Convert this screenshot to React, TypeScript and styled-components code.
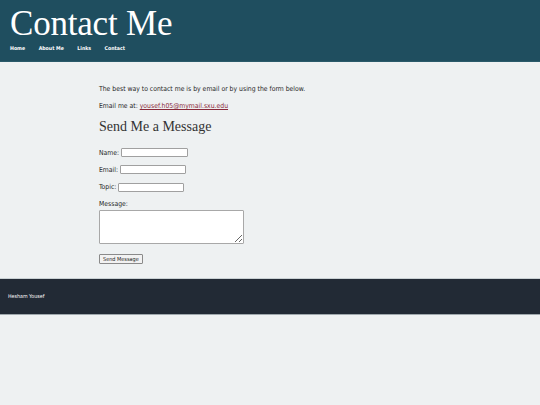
import styled, { createGlobalStyle } from 'styled-components';

const GlobalStyle = createGlobalStyle`
    html, body {
        margin: 0;
        padding: 0;
        background: #eef1f2;
    }
    body {
        font-family: "DejaVu Sans Condensed", "DejaVu Sans", sans-serif;
        font-size: 6.8px;
        color: #1e1e1e;
    }
`;

const App = () => {
    return (
        <>
            <GlobalStyle />
            <Header>
                <Title>Contact Me</Title>
                <Nav>
                    <NavLink href="#">Home</NavLink>
                    <NavLink href="#">About Me</NavLink>
                    <NavLink href="#">Links</NavLink>
                    <NavLink href="#">Contact</NavLink>
                </Nav>
            </Header>

            <Main>
                <Paragraph>The best way to contact me is by email or by using the form below.</Paragraph>
                <Paragraph>
                    Email me at: <MailLink href="#">yousef.h05@mymail.sxu.edu</MailLink>
                </Paragraph>

                <Heading>Send Me a Message</Heading>

                <Form onSubmit={e => e.preventDefault()}>
                    <Field>
                        <label>Name:</label>
                        <TextInput type="text" $width={67} />
                    </Field>
                    <Field>
                        <label>Email:</label>
                        <TextInput type="text" $width={66} />
                    </Field>
                    <Field>
                        <label>Topic:</label>
                        <TextInput type="text" $width={66} />
                    </Field>
                    <Stacked>
                        <label>Message:</label>
                        <MessageBox />
                    </Stacked>
                    <SendButton type="submit">Send Message</SendButton>
                </Form>
            </Main>

            <Footer>Hesham Yousef</Footer>
        </>
    );
};

export default App;

const Header = styled.header`
    background: #1f4e5f;
    height: 62px;
    box-sizing: border-box;
    padding: 6px 10px 0;
    border-bottom: 1px solid #2a5a6a;
`;

const Title = styled.h1`
    margin: 0;
    font-family: "Liberation Serif", "Times New Roman", serif;
    font-weight: normal;
    font-size: 35px;
    line-height: 36px;
    color: #fff;
    letter-spacing: -0.2px;
`;

const Nav = styled.nav`
    display: flex;
    gap: 13.5px;
    margin-top: 3px;
`;

const NavLink = styled.a`
    color: #fff;
    font-weight: bold;
    font-size: 5.2px;
    text-decoration: none;
`;

const Main = styled.main`
    padding: 23px 0 14px 99px;
`;

const Paragraph = styled.p`
    margin: 0 0 9px;
    line-height: 8px;
`;

const MailLink = styled.a`
    color: #8a2a3a;
    text-decoration: underline;
`;

const Heading = styled.h2`
    margin: 9px 0 13px;
    font-family: "Liberation Serif", "Times New Roman", serif;
    font-weight: normal;
    font-size: 14px;
    line-height: 16px;
    color: #333;
`;

const Form = styled.form`
    display: flex;
    flex-direction: column;
    align-items: flex-start;
    gap: 8.4px;
`;

const Field = styled.div`
    display: flex;
    align-items: center;
    gap: 2px;
    height: 9px;
`;

const Stacked = styled.div`
    display: flex;
    flex-direction: column;
    gap: 2px;
`;

const TextInput = styled.input<{ $width: number }>`
    box-sizing: border-box;
    width: ${p => p.$width}px;
    height: 9px;
    padding: 0;
    border: 1px solid #a0a0a0;
    border-radius: 1px;
    background: #fff;
`;

const MessageBox = styled.textarea`
    box-sizing: border-box;
    width: 145px;
    height: 34px;
    padding: 0;
    border: 1px solid #a8a8a8;
    border-radius: 1px;
    background: #fff;
`;

const SendButton = styled.button`
    margin-top: 1px;
    box-sizing: border-box;
    height: 10px;
    padding: 0 3px;
    font-family: "DejaVu Sans Condensed", "DejaVu Sans", sans-serif;
    font-size: 5.5px;
    line-height: 8px;
    color: #222;
    background: #f2f2f2;
    border: 1px solid #8a8a8a;
    border-radius: 1px;
`;

const Footer = styled.footer`
    background: #222a35;
    height: 37px;
    box-sizing: border-box;
    border-top: 1px solid #c9d1d4;
    border-bottom: 1px solid #9fa8ad;
    padding-left: 8px;
    display: flex;
    align-items: center;
    color: #fff;
    font-size: 5.3px;
`;
